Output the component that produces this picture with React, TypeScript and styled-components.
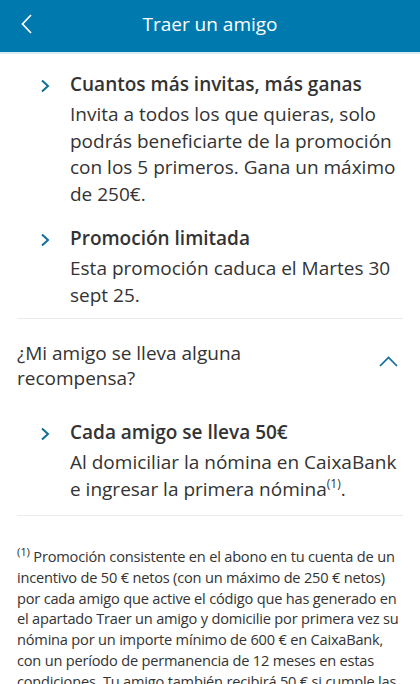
import React from "react";
import styled, { createGlobalStyle } from "styled-components";

const Global = createGlobalStyle`
  html, body { margin: 0; padding: 0; background: #fff; }
  body { font-family: "Open Sans", "Noto Sans", sans-serif; color: #333; overflow: hidden; }
  * { box-sizing: border-box; }
`;

const Page = styled.div`
  width: 420px;
  height: 684px;
  overflow: hidden;
  display: flex;
  flex-direction: column;
`;

const Header = styled.header`
  height: 52px;
  flex: none;
  background: #007aae;
  box-shadow: 0 2px 0 #d8ecf5;
  display: grid;
  grid-template-columns: 52px 1fr 52px;
  align-items: center;
  color: #fff;
`;

const BackButton = styled.button`
  background: none;
  border: none;
  padding: 0 0 0 21px;
  height: 52px;
  display: flex;
  align-items: center;
  color: #fff;
  cursor: pointer;
  margin-top: -4px;
`;

const Title = styled.h1`
  margin: 0;
  text-align: center;
  font-size: 19px;
  font-weight: 400;
  margin-top: -4px;
`;

const Content = styled.main`
  padding: 0 17px;
  display: flex;
  flex-direction: column;
`;

const Block = styled.section<{ $top: number; $gap: number; $bottom: number }>`
  padding-top: ${(p) => p.$top}px;
  padding-bottom: ${(p) => p.$bottom}px;
  border-bottom: 1.5px solid #ebebeb;
  display: flex;
  flex-direction: column;
  gap: ${(p) => p.$gap}px;
`;

const Item = styled.div`
  display: grid;
  grid-template-columns: 53px 1fr;
`;

const Chevron = styled.div`
  padding: 6px 0 0 23px;
  color: #0d6f99;
`;

const ItemTitle = styled.div`
  font-size: 19px;
  font-weight: 600;
  line-height: 28px;
  margin-bottom: 3px;
  color: #333;
`;

const ItemText = styled.div`
  font-size: 19px;
  font-weight: 400;
  line-height: 26.5px;
  color: #333;
`;

const Sup = styled.span`
  font-size: 12px;
  position: relative;
  top: -8px;
  line-height: 0;
`;

const Question = styled.div`
  display: flex;
  justify-content: space-between;
  align-items: flex-start;
  padding-bottom: 10px;
`;

const QuestionText = styled.div`
  font-size: 19px;
  line-height: 25px;
  color: #333;
  width: 260px;
`;

const Toggle = styled.div`
  color: #0d6f99;
  padding-right: 5px;
  padding-top: 15px;
  line-height: 0;
`;

const Footnote = styled.p`
  margin: 0;
  padding-top: 30px;
  font-size: 14.6px;
  letter-spacing: -0.2px;
  line-height: 20.8px;
  color: #333;
`;

const FootSup = styled.span`
  font-size: 11.5px;
  position: relative;
  top: -6px;
  line-height: 0;
`;

const RightChevron = () => (
  <svg width="10" height="14" viewBox="0 0 10 14" fill="none">
    <path d="M2 1.5 L8 7 L2 12.5" stroke="currentColor" strokeWidth="2" />
  </svg>
);

const items1 = [
  {
    title: "Cuantos más invitas, más ganas",
    text: "Invita a todos los que quieras, solo podrás beneficiarte de la promoción con los 5 primeros. Gana un máximo de 250€.",
  },
  {
    title: "Promoción limitada",
    text: "Esta promoción caduca el Martes 30 sept 25.",
  },
];

export default function App() {
  return (
    <Page>
      <Global />
      <Header>
        <BackButton aria-label="Volver">
          <svg width="11" height="20" viewBox="0 0 11 20" fill="none">
            <path d="M10 1 L1.5 10 L10 19" stroke="currentColor" strokeWidth="1.7" />
          </svg>
        </BackButton>
        <Title>Traer un amigo</Title>
        <span />
      </Header>
      <Content>
        <Block $top={18} $gap={17} $bottom={10}>
          {items1.map((it) => (
            <Item key={it.title}>
              <Chevron>
                <RightChevron />
              </Chevron>
              <div>
                <ItemTitle>{it.title}</ItemTitle>
                <ItemText>{it.text}</ItemText>
              </div>
            </Item>
          ))}
        </Block>
        <Block $top={22} $gap={17} $bottom={13}>
          <Question>
            <QuestionText>¿Mi amigo se lleva alguna recompensa?</QuestionText>
            <Toggle>
              <svg width="19" height="11" viewBox="0 0 19 11" fill="none">
                <path d="M1 10 L9.5 1.5 L18 10" stroke="currentColor" strokeWidth="1.7" />
              </svg>
            </Toggle>
          </Question>
          <Item>
            <Chevron>
              <RightChevron />
            </Chevron>
            <div>
              <ItemTitle>Cada amigo se lleva 50€</ItemTitle>
              <ItemText>
                Al domiciliar la nómina en CaixaBank e ingresar la primera nómina
                <Sup>(1)</Sup>.
              </ItemText>
            </div>
          </Item>
        </Block>
        <Footnote>
          <FootSup>(1)</FootSup> Promoción consistente en el abono en tu cuenta de un incentivo de 50 € netos (con un máximo de 250 € netos) por cada amigo que active el código que has generado en el apartado Traer un amigo y domicilie por primera vez su nómina por un importe mínimo de 600 € en CaixaBank, con un período de permanencia de 12 meses en estas condiciones. Tu amigo también recibirá 50 € si cumple las condiciones en su cuenta. El incentivo se abonará en su cuenta.
        </Footnote>
      </Content>
    </Page>
  );
}
